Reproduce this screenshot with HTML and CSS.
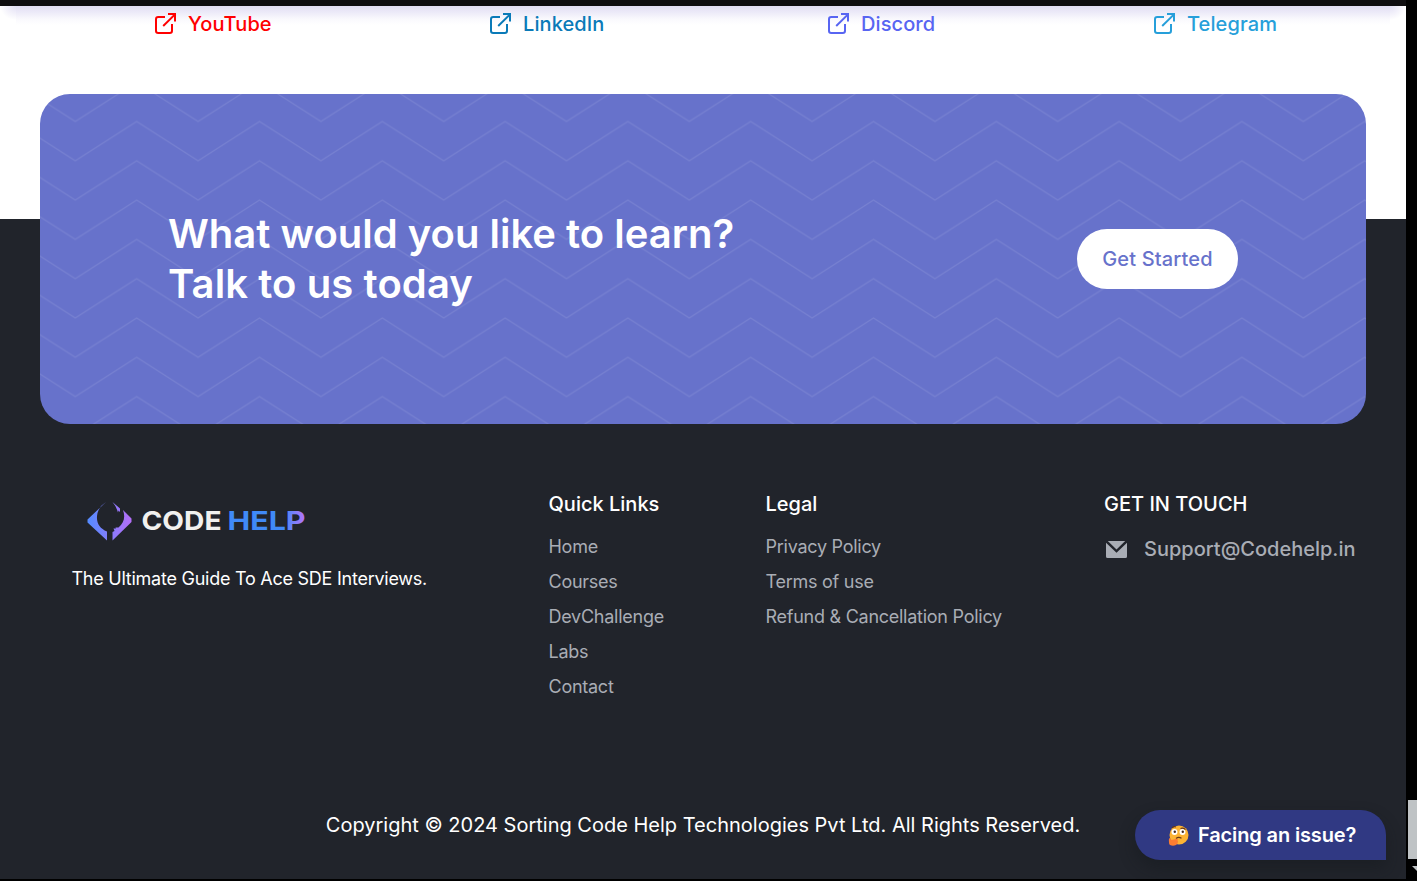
FILE: index.html
```html
<!DOCTYPE html>
<html lang="en">
<head>
<meta charset="utf-8">
<title>Code Help</title>
<link rel="stylesheet" href="styles.css">
</head>
<body>
<svg class="defs" width="0" height="0" aria-hidden="true">
  <symbol id="external" viewBox="0 0 22 22">
    <path d="M10 4H3.200Q1 4 1 6.200V17.800Q1 20 3.200 20H14.800Q17 20 17 17.800V11M8.200 13L20 1.400M13 1H20V8.500" fill="none" stroke="currentColor" stroke-width="2"/>
  </symbol>
</svg>
<div class="screen">
  <div class="page">
    <header class="topbar"></header>
    <main class="community">
      <nav class="socials">
        <a class="social youtube"><svg><use href="#external"/></svg><span>YouTube</span></a>
        <a class="social linkedin"><svg><use href="#external"/></svg><span>LinkedIn</span></a>
        <a class="social discord"><svg><use href="#external"/></svg><span>Discord</span></a>
        <a class="social telegram"><svg><use href="#external"/></svg><span>Telegram</span></a>
      </nav>
    </main>
    <section class="cta">
      <svg class="waves" width="1326" height="330" aria-hidden="true">
        <defs>
          <pattern id="zigzag" x="35.3" y="27.5" width="122.8" height="39.3" patternUnits="userSpaceOnUse">
            <path d="M-61.400 0L0 39.300L61.400 0L122.800 39.300L184.200 0M-61.400 -39.300L0 0L61.400 -39.300L122.800 0L184.200 -39.300M0 78.600L61.400 39.300L122.800 78.600" fill="none" stroke="#fff" stroke-opacity=".1" stroke-width="1.200"/>
          </pattern>
        </defs>
        <rect width="1326" height="330" fill="url(#zigzag)"/>
      </svg>
      <h2>What would you like to learn?<br><span class="second">Talk to us today</span></h2>
      <button class="start">Get Started</button>
    </section>
    <footer class="footer">
      <div class="columns">
        <div class="brand">
          <svg class="logo" width="222" height="44" viewBox="0 0 222 44">
            <defs>
              <linearGradient id="mark" gradientUnits="userSpaceOnUse" x1="2" y1="0" x2="46" y2="0"><stop offset="0" stop-color="#558bff"/><stop offset="1" stop-color="#b66ef8"/></linearGradient>
              <linearGradient id="word" gradientUnits="userSpaceOnUse" x1="143" y1="0" x2="219" y2="0"><stop offset="0" stop-color="#408af8"/><stop offset=".72" stop-color="#408af8"/><stop offset="1" stop-color="#b574fa"/></linearGradient>
            </defs>
            <path fill="url(#mark)" d="M20 2L1.500 19.500V22.500L21 40.500V31.500C13 28 9.500 22 11.500 13Q13.500 6 20 2ZM26.500 2L34 8.500V12L32.500 10.500L32 12.500Q30 6 26.500 2ZM37 10L45.500 18.500V22L26.500 40.500V32L28.500 31L27.500 28.500H30L29.500 27.500H32.500C38 23 39.500 17 37 10Z"/>
            <text class="word" x="55.500" y="29.500" textLength="80" lengthAdjust="spacingAndGlyphs" fill="#f1f1ef">CODE</text>
            <text class="word" x="141.500" y="29.500" textLength="78" lengthAdjust="spacingAndGlyphs" fill="url(#word)">HELP</text>
          </svg>
          <p>The Ultimate Guide To Ace SDE Interviews.</p>
        </div>
        <div class="links">
          <h3>Quick Links</h3>
          <a>Home</a><a>Courses</a><a>DevChallenge</a><a>Labs</a><a>Contact</a>
        </div>
        <div class="links">
          <h3>Legal</h3>
          <a>Privacy Policy</a><a>Terms of use</a><a>Refund &amp; Cancellation Policy</a>
        </div>
        <div class="touch">
          <h3>GET IN TOUCH</h3>
          <a class="mail">
            <svg width="21" height="17" viewBox="0 0 21 17"><path fill="#a9adb5" d="M0 1.700V15.500Q0 17 1.500 17H19.500Q21 17 21 15.500V1.700L10.500 11.700ZM1.800 0H19.200L10.500 8.500Z"/></svg>
            <span>Support@Codehelp.in</span>
          </a>
        </div>
      </div>
      <p class="copyright">Copyright © 2024 Sorting Code Help Technologies Pvt Ltd. All Rights Reserved.</p>
    </footer>
    <button class="issue">
      <svg width="21" height="21" viewBox="0 0 21 21">
        <circle cx="11" cy="10" r="9.500" fill="#fcb334"/>
        <circle cx="6.500" cy="7" r="3" fill="#fff"/><circle cx="14.500" cy="7" r="3" fill="#fff"/>
        <circle cx="6.800" cy="6.800" r="1.200" fill="#44291d"/><circle cx="14.800" cy="6.800" r="1.200" fill="#44291d"/>
        <path d="M4 2.800Q6 .8 8 2M12.500 3.500Q15 2.500 17.500 4.500M8 13.500Q10.500 11.500 13.500 13.300" fill="none" stroke="#653817" stroke-width="1.200"/>
        <path d="M1 13.500Q2 12.500 3.500 15L9 13.800Q10.500 14 9.500 15.200Q11 18 8 20Q5 21.500 2 20Q.5 19 1 13.500Z" fill="#fb7d32"/>
      </svg>
      <span>Facing an issue?</span>
    </button>
  </div>
  <div class="scrollbar"><div class="thumb"></div><div class="arrow"></div></div>
</div>
</body>
</html>
```
FILE: styles.css
```css
* { box-sizing: border-box; }
body { margin: 0; background: #000; font-family: Inter, sans-serif; overflow: hidden; }
h2, h3, p { margin: 0; }
button { border: 0; font-family: inherit; }
.defs { position: absolute; }
.screen { display: flex; width: 1417px; height: 881px; }
.page { position: relative; width: 1406px; height: 879px; background: #fff; overflow: hidden; }
.topbar { height: 6px; background: #0f0e10; }
.community { height: 213px; background: radial-gradient(ellipse 16px 14px at 16px 0, rgba(80, 60, 190, .16), transparent) 0 0 / 16px 18px no-repeat, radial-gradient(ellipse 16px 14px at 0 0, rgba(80, 60, 190, .16), transparent) 100% 0 / 16px 18px no-repeat, linear-gradient(rgba(80, 60, 190, .17), rgba(80, 60, 190, .11) 6px, rgba(80, 60, 190, .03) 13px, transparent 19px) 50% 0 / calc(100% - 32px) 20px no-repeat; }
.socials { display: flex; padding: 6px 0 0 154.500px; }
.social { display: flex; align-items: center; gap: 11.500px; height: 24px; font-size: 20px; font-weight: 500; }
.social svg { width: 22px; height: 22px; }
.youtube { width: 335px; color: #f00; }
.linkedin { width: 338px; color: #0a7ab8; }
.discord { width: 326px; color: #5865f2; }
.telegram { color: #269fda; }
.social span { letter-spacing: .1px; }
.cta { position: relative; display: flex; justify-content: space-between; align-items: center; width: 1326px; height: 330px; margin: -125px 0 0 40px; padding: 0 128px; border-radius: 30px; background: #6772cb; overflow: hidden; z-index: 1; }
.waves { position: absolute; inset: 0; }
.cta h2 { position: relative; color: #fff; font-size: 40px; font-weight: 600; line-height: 50px; }
.second { letter-spacing: .1px; }
.start { position: relative; width: 161px; height: 60px; border-radius: 30px; background: #fff; color: #6772cb; font-size: 20px; font-weight: 500; letter-spacing: .15px; padding: 0; }
.footer { height: 660px; margin-top: -205px; padding-top: 273px; background: #21242b; color: #fff; }
.columns { display: grid; grid-template-columns: 477px 217px 338.500px 1fr; padding-left: 71.500px; height: 313px; }
.logo { display: block; margin: 8px 0 0 14px; }
.word { font-family: Inter, sans-serif; font-size: 26px; font-weight: 650; }
.brand p { margin-top: 23px; font-size: 18px; line-height: 24px; letter-spacing: -.25px; }
.columns h3 { font-size: 20px; font-weight: 500; line-height: 24px; }
.links { display: flex; flex-direction: column; }
.links h3 { margin-bottom: 13px; }
.links a { height: 35px; color: #a9adb5; font-size: 18px; line-height: 35px; letter-spacing: -.26px; white-space: nowrap; }
.mail { display: flex; align-items: center; gap: 17px; margin: 21px 0 0 2px; height: 24px; color: #a9adb5; font-size: 20px; font-weight: 500; }
.copyright { width: 1406px; text-align: center; font-size: 20px; line-height: 40px; }
.issue { position: absolute; z-index: 2; right: 20px; bottom: 19px; display: flex; align-items: center; gap: 9px; width: 251px; height: 50px; padding: 0 0 0 33px; border-radius: 25px 25px 0 25px; background: #303983; color: #fff; font-size: 20px; font-weight: 600; letter-spacing: -.14px; box-shadow: 0 8px 16px rgba(20, 24, 28, .45); }
.scrollbar { width: 11px; padding: 800px 0 0 2px; background: #000; overflow: hidden; }
.thumb { height: 59px; background: #bfc3c5; }
.arrow { width: 0; margin: 7px 0 0 4px; border: 5px solid transparent; border-top-color: #bfc3c5; border-bottom: 0; }
```
